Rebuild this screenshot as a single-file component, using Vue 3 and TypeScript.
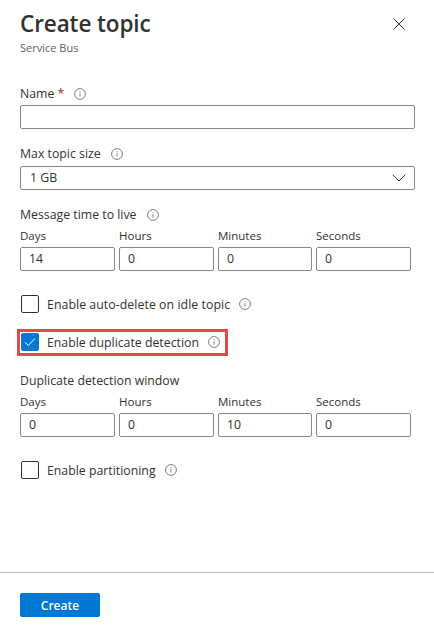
<script setup lang="ts">
interface Cell { label: string; value: string }
const ttl: Cell[] = [
  { label: 'Days', value: '14' },
  { label: 'Hours', value: '0' },
  { label: 'Minutes', value: '0' },
  { label: 'Seconds', value: '0' },
]
const dup: Cell[] = [
  { label: 'Days', value: '0' },
  { label: 'Hours', value: '0' },
  { label: 'Minutes', value: '10' },
  { label: 'Seconds', value: '0' },
]
</script>

<template>
  <div class="panel">
    <header class="head">
      <div>
        <h1 class="title">Create topic</h1>
        <div class="sub">Service Bus</div>
      </div>
      <button class="close" aria-label="Close">
        <svg width="12" height="12" viewBox="0 0 12 12"><path d="M.5.5l11 11M11.5.5l-11 11" stroke="#323130" stroke-width="1" fill="none" /></svg>
      </button>
    </header>

    <main class="form">
      <div class="label name-label">
        <span>Name</span><span class="req">*</span>
        <svg class="info" viewBox="0 0 12 12"><circle cx="6" cy="6" r="5.4" /><path d="M6 5.2v3.2M6 3.2v1" /></svg>
      </div>
      <div class="box"></div>

      <div class="label size-label">
        <span>Max topic size</span>
        <svg class="info" viewBox="0 0 12 12"><circle cx="6" cy="6" r="5.4" /><path d="M6 5.2v3.2M6 3.2v1" /></svg>
      </div>
      <div class="box select">
        <span>1 GB</span>
        <svg width="14" height="8" viewBox="0 0 14 8"><path d="M.7.8L7 7l6.3-6.2" stroke="#323130" fill="none" /></svg>
      </div>

      <div class="label ttl-label">
        <span>Message time to live</span>
        <svg class="info" viewBox="0 0 12 12"><circle cx="6" cy="6" r="5.4" /><path d="M6 5.2v3.2M6 3.2v1" /></svg>
      </div>
      <div class="grid">
        <div v-for="c in ttl" :key="c.label" class="cell">
          <div class="cell-label">{{ c.label }}</div>
          <div class="box num">{{ c.value }}</div>
        </div>
      </div>

      <div class="check first">
        <span class="tick"></span>
        <span>Enable auto-delete on idle topic</span>
        <svg class="info" viewBox="0 0 12 12"><circle cx="6" cy="6" r="5.4" /><path d="M6 5.2v3.2M6 3.2v1" /></svg>
      </div>

      <div class="highlight">
        <div class="check">
          <span class="tick on">
            <svg width="12" height="10" viewBox="0 0 12 10"><path d="M1 5.3l3.3 3.2L11 1.4" stroke="#fff" fill="none" /></svg>
          </span>
          <span>Enable duplicate detection</span>
          <svg class="info" viewBox="0 0 12 12"><circle cx="6" cy="6" r="5.4" /><path d="M6 5.2v3.2M6 3.2v1" /></svg>
        </div>
      </div>

      <div class="label dup-label"><span>Duplicate detection window</span></div>
      <div class="grid">
        <div v-for="c in dup" :key="c.label" class="cell">
          <div class="cell-label">{{ c.label }}</div>
          <div class="box num">{{ c.value }}</div>
        </div>
      </div>

      <div class="check last">
        <span class="tick"></span>
        <span>Enable partitioning</span>
        <svg class="info" viewBox="0 0 12 12"><circle cx="6" cy="6" r="5.4" /><path d="M6 5.2v3.2M6 3.2v1" /></svg>
      </div>
    </main>

    <footer class="foot">
      <button class="create">Create</button>
    </footer>
  </div>
</template>

<style>
html, body { margin: 0; background: #fff; }
</style>

<style scoped>
.panel {
  box-sizing: border-box;
  width: 434px;
  height: 637px;
  display: flex;
  flex-direction: column;
  font-family: "Open Sans", "Noto Sans", sans-serif;
  font-size: 12.3px;
  color: #323130;
  background: #fff;
}
.head {
  display: flex;
  justify-content: space-between;
  padding: 8px 29px 0 20px;
  height: 77px;
  box-sizing: border-box;
}
.title {
  margin: 0;
  font-size: 22.5px;
  line-height: 32px;
  font-weight: 600;
  letter-spacing: -0.1px;
  color: #323130;
}
.sub {
  font-size: 11px;
  line-height: 15px;
  color: #605e5c;
  margin-top: 0;
}
.close {
  border: 0;
  background: none;
  padding: 0;
  width: 12px;
  height: 12px;
  margin-top: 10px;
  display: block;
}
.close svg { display: block; }
.form { flex: 1; padding: 0 19px 0 20px; }
.label {
  display: flex;
  align-items: center;
  height: 18px;
  line-height: 18px;
}
.name-label { margin-top: 8px; margin-bottom: 2px; }
.size-label { margin-top: 16px; margin-bottom: 3px; }
.ttl-label { margin-top: 16px; margin-bottom: 3px; }
.dup-label { margin-top: 16px; margin-bottom: 3px; }
.req { color: #a4262c; margin-left: 3px; }
.info {
  width: 12px;
  height: 12px;
  margin-left: 10px;
  flex: none;
  fill: none;
  stroke: #605e5c;
  stroke-width: 0.8;
}
.box {
  box-sizing: border-box;
  height: 24px;
  border: 1px solid #8a8886;
  border-radius: 2px;
  background: #fff;
}
.select {
  display: flex;
  align-items: center;
  justify-content: space-between;
  padding: 0 8px 0 9px;
  line-height: 22px;
}
.grid {
  display: grid;
  grid-template-columns: 95px 95px 94px 95px;
  column-gap: 4px;
  width: 391px;
}
.cell-label {
  font-size: 11.5px;
  height: 18px;
  line-height: 18px;
  margin-bottom: 2px;
}
.num {
  padding-left: 8px;
  line-height: 22px;
}
.check {
  display: flex;
  align-items: center;
  height: 18px;
  gap: 8px;
}
.check .info { margin-left: 1px; }
.first { margin-top: 24px; padding-left: 1px; }
.first span:nth-child(2) { letter-spacing: 0.06px; }
.last { margin-top: 24px; padding-left: 1px; }
.tick {
  box-sizing: border-box;
  width: 18px;
  height: 18px;
  border: 1px solid #323130;
  border-radius: 2px;
  display: flex;
  align-items: center;
  justify-content: center;
  flex: none;
}
.tick.on { background: #0078d4; border-color: #0078d4; }
.highlight {
  box-sizing: border-box;
  width: 211px;
  height: 27px;
  margin: 16px 0 0 -3px;
  padding: 1px 0 0 1px;
  border: 3px solid #e04a48;
}
.foot {
  box-sizing: border-box;
  height: 65px;
  border-top: 1px solid #bdbdbd;
  padding: 20px 0 0 20px;
}
.create {
  display: block;
  width: 80px;
  height: 24px;
  padding: 0;
  border: 0;
  border-radius: 2px;
  background: #0078d4;
  color: #fff;
  font-family: inherit;
  font-size: 12px;
  font-weight: 600;
}
</style>
